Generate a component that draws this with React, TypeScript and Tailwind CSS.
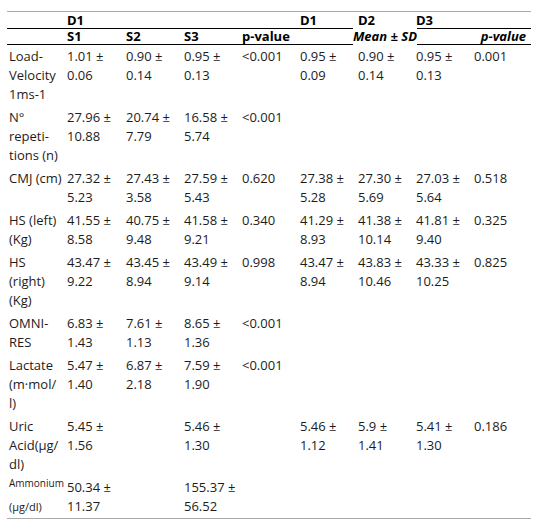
const rows = [
  {
    label: ["Load-", "Velocity", "1ms-1"],
    d1: [["1.01", "0.06"], ["0.90", "0.14"], ["0.95", "0.13"]],
    p1: "<0.001",
    d: [["0.95", "0.09"], ["0.90", "0.14"], ["0.95", "0.13"]],
    p2: "0.001",
  },
  {
    label: ["N°", "repeti-", "tions (n)"],
    d1: [["27.96", "10.88"], ["20.74", "7.79"], ["16.58", "5.74"]],
    p1: "<0.001",
  },
  {
    label: ["CMJ (cm)"],
    d1: [["27.32", "5.23"], ["27.43", "3.58"], ["27.59", "5.43"]],
    p1: "0.620",
    d: [["27.38", "5.28"], ["27.30", "5.69"], ["27.03", "5.64"]],
    p2: "0.518",
  },
  {
    label: ["HS (left)", "(Kg)"],
    d1: [["41.55", "8.58"], ["40.75", "9.48"], ["41.58", "9.21"]],
    p1: "0.340",
    d: [["41.29", "8.93"], ["41.38", "10.14"], ["41.81", "9.40"]],
    p2: "0.325",
  },
  {
    label: ["HS", "(right)", "(Kg)"],
    d1: [["43.47", "9.22"], ["43.45", "8.94"], ["43.49", "9.14"]],
    p1: "0.998",
    d: [["43.47", "8.94"], ["43.83", "10.46"], ["43.33", "10.25"]],
    p2: "0.825",
  },
  {
    label: ["OMNI-", "RES"],
    d1: [["6.83", "1.43"], ["7.61", "1.13"], ["8.65", "1.36"]],
    p1: "<0.001",
  },
  {
    label: ["Lactate", "(m·mol/", "l)"],
    d1: [["5.47", "1.40"], ["6.87", "2.18"], ["7.59", "1.90"]],
    p1: "<0.001",
  },
  {
    label: ["Uric", "Acid(µg/", "dl)"],
    d1: [["5.45", "1.56"], null, ["5.46", "1.30"]],
    p1: "",
    d: [["5.46", "1.12"], ["5.9", "1.41"], ["5.41", "1.30"]],
    p2: "0.186",
  },
] as Row[];

type Row = {
  label: string[];
  d1: (string[] | null)[];
  p1: string;
  d?: string[][];
  p2?: string;
};

const td = "pl-[2px] py-[2px] align-top";

const Val = ({ v }: { v: string[] | null | undefined }) =>
  v ? (
    <>
      <div>{v[0]} ±</div>
      <div>{v[1]}</div>
    </>
  ) : null;

export default function App() {
  return (
    <div className="bg-white min-h-[520px] pt-[11px] pl-[7px] font-['Open_Sans',sans-serif] text-[13px] leading-[19px] text-[#1c1c1c]">
      <table className="w-[524px] table-fixed border-collapse border-t border-[#aaa]">
        <colgroup>
          <col className="w-[58px]" />
          <col className="w-[59px]" />
          <col className="w-[58px]" />
          <col className="w-[58px]" />
          <col className="w-[58px]" />
          <col className="w-[58px]" />
          <col className="w-[58px]" />
          <col className="w-[58px]" />
          <col className="w-[59px]" />
        </colgroup>
        <thead className="font-bold text-black">
          <tr className="border-b border-black">
            <td className="h-[16px] leading-[16px]"></td>
            <td className="pl-[2px] leading-[16px]">D1</td>
            <td></td>
            <td></td>
            <td></td>
            <td className="pl-[2px] leading-[16px]">D1</td>
            <td className="pl-[2px] leading-[16px]">D2</td>
            <td className="pl-[2px] leading-[16px]">D3</td>
            <td></td>
          </tr>
          <tr className="border-b border-black">
            <td className="h-[15px] leading-[15px]"></td>
            <td className="pl-[2px] leading-[15px]">S1</td>
            <td className="pl-[2px] leading-[15px]">S2</td>
            <td className="pl-[2px] leading-[15px]">S3</td>
            <td className="pl-[2px] leading-[15px]">p-value</td>
            <td colSpan={3} className="text-center leading-[15px] italic">
              <span className="bg-white py-[2px]">Mean ± SD</span>
            </td>
            <td className="pr-[5px] text-right leading-[15px] italic">p-value</td>
          </tr>
        </thead>
        <tbody>
          {rows.map((r, i) => (
            <tr key={i}>
              <td className={td}>
                {r.label.map((l, j) => (
                  <div key={j}>{l}</div>
                ))}
              </td>
              {r.d1.map((v, j) => (
                <td key={j} className={td}>
                  <Val v={v} />
                </td>
              ))}
              <td className={td}>{r.p1}</td>
              {[0, 1, 2].map((j) => (
                <td key={j} className={td}>
                  <Val v={r.d?.[j]} />
                </td>
              ))}
              <td className={td}>{r.p2}</td>
            </tr>
          ))}
          <tr className="border-b border-[#aaa]">
            <td className={td}>
              <div>
                <sup className="text-[10px]">Ammonium</sup>
              </div>
              <div className="text-[11px]">(µg/dl)</div>
            </td>
            <td className={td}>
              <Val v={["50.34", "11.37"]} />
            </td>
            <td className={td}></td>
            <td className={td}>
              <Val v={["155.37", "56.52"]} />
            </td>
            <td className={td}></td>
            <td className={td}></td>
            <td className={td}></td>
            <td className={td}></td>
            <td className={td}></td>
          </tr>
        </tbody>
      </table>
    </div>
  );
}
